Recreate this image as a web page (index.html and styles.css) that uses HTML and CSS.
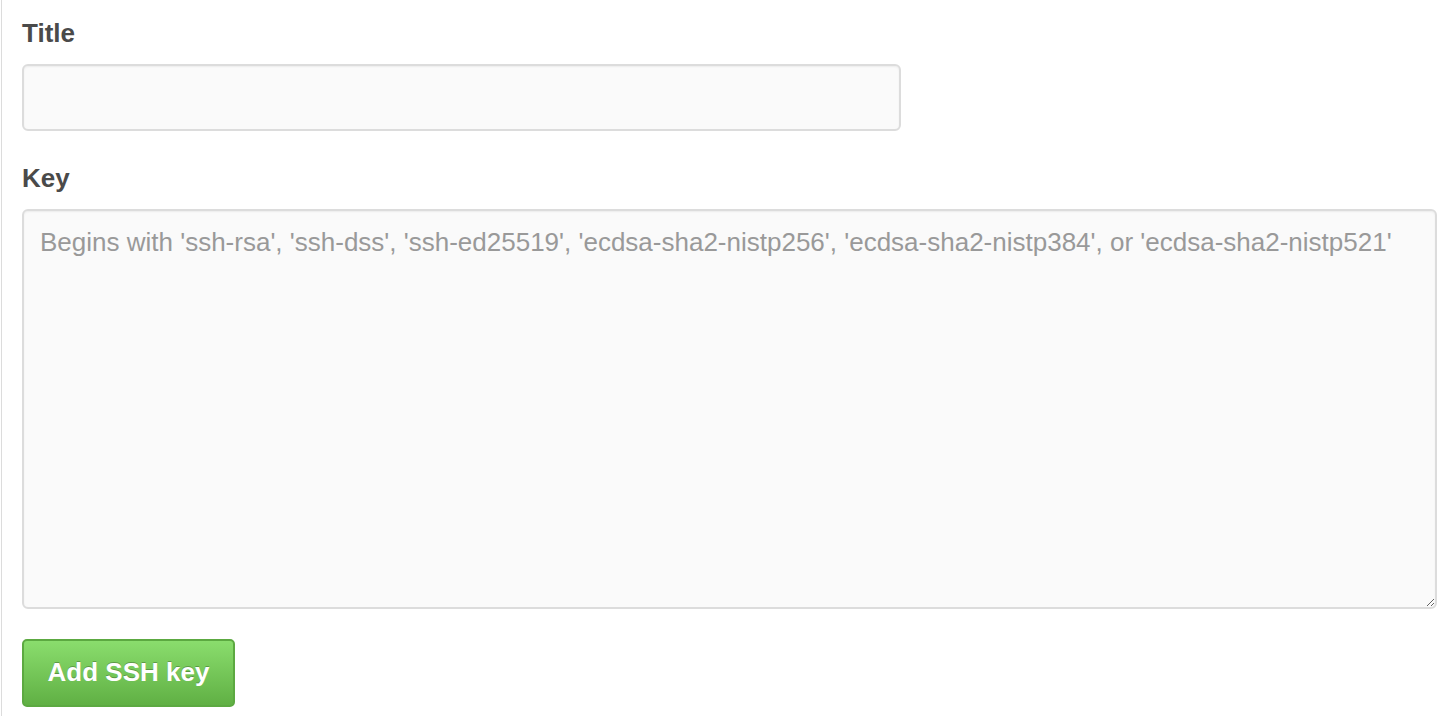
FILE: index.html
```html
<!DOCTYPE html>
<html>
<head>
<meta charset="utf-8">
<link rel="stylesheet" href="styles.css">
</head>
<body>
<div class="page">
  <form class="key-form">
    <div class="field">
      <label class="label" for="title">Title</label>
      <input class="input" id="title" type="text">
    </div>
    <div class="field">
      <label class="label" for="key">Key</label>
      <textarea class="textarea" id="key" placeholder="Begins with 'ssh-rsa', 'ssh-dss', 'ssh-ed25519', 'ecdsa-sha2-nistp256', 'ecdsa-sha2-nistp384', or 'ecdsa-sha2-nistp521'"></textarea>
    </div>
    <div class="actions">
      <button class="btn-primary" type="button">Add SSH key</button>
    </div>
  </form>
</div>
</body>
</html>
```
FILE: styles.css
```css
html, body {
  margin: 0;
  padding: 0;
  background: #fff;
}
body {
  font-family: "Liberation Sans", Arial, Helvetica, sans-serif;
  color: #333;
}
.page {
  margin-left: 1px;
  border-left: 1px solid #dcdcdc;
  min-height: 716px;
  box-sizing: border-box;
  padding: 18px 10px 0 20px;
}
.key-form {
  display: flex;
  flex-direction: column;
}
.field {
  display: flex;
  flex-direction: column;
}
.field + .field {
  margin-top: 32px;
}
.label {
  font-size: 26px;
  line-height: 30px;
  font-weight: bold;
  color: #4a4a4a;
  margin-bottom: 16px;
}
.input, .textarea {
  box-sizing: border-box;
  border: 2px solid #dcdcdc;
  border-radius: 6px;
  background: #fafafa;
  box-shadow: inset 0 1px 2px rgba(0,0,0,0.06);
  font-family: "Liberation Sans", Arial, Helvetica, sans-serif;
  font-size: 26px;
  color: #333;
  outline: none;
}
.input {
  width: 879px;
  height: 67px;
  padding: 0 16px;
}
.textarea {
  width: 1415px;
  height: 400px;
  padding: 14px 16px;
  line-height: 34px;
  resize: vertical;
}
.textarea::placeholder {
  color: #999;
}
.actions {
  margin-top: 30px;
}
.btn-primary {
  width: 213px;
  height: 68px;
  box-sizing: border-box;
  border: 2px solid #5ca941;
  border-radius: 5px;
  background: linear-gradient(#8add6d, #60b044);
  color: #fff;
  font-family: "Liberation Sans", Arial, Helvetica, sans-serif;
  font-size: 26px;
  font-weight: bold;
  text-shadow: 0 -1px 0 rgba(0,0,0,0.25);
  padding: 0 0 2px;
  cursor: pointer;
}
```
